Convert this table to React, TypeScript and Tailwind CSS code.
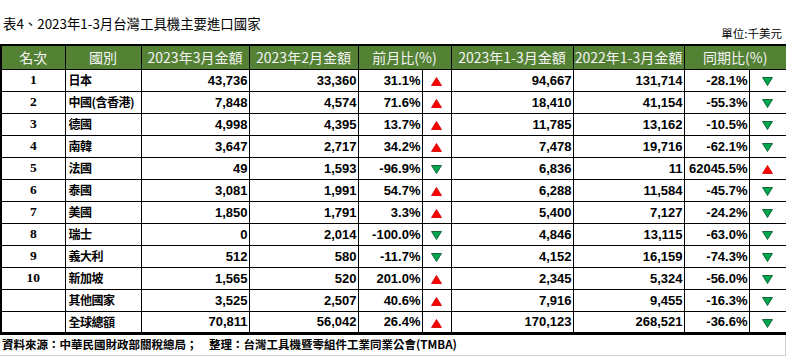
import React from "react";

type Row = {
  rank: string;
  name: string;
  m3: string;
  m2: string;
  mom: string;
  momUp: boolean;
  y23: string;
  y22: string;
  yoy: string;
  yoyUp: boolean;
};

const rows: Row[] = [
  { rank: "1", name: "日本", m3: "43,736", m2: "33,360", mom: "31.1%", momUp: true, y23: "94,667", y22: "131,714", yoy: "-28.1%", yoyUp: false },
  { rank: "2", name: "中國(含香港)", m3: "7,848", m2: "4,574", mom: "71.6%", momUp: true, y23: "18,410", y22: "41,154", yoy: "-55.3%", yoyUp: false },
  { rank: "3", name: "德國", m3: "4,998", m2: "4,395", mom: "13.7%", momUp: true, y23: "11,785", y22: "13,162", yoy: "-10.5%", yoyUp: false },
  { rank: "4", name: "南韓", m3: "3,647", m2: "2,717", mom: "34.2%", momUp: true, y23: "7,478", y22: "19,716", yoy: "-62.1%", yoyUp: false },
  { rank: "5", name: "法國", m3: "49", m2: "1,593", mom: "-96.9%", momUp: false, y23: "6,836", y22: "11", yoy: "62045.5%", yoyUp: true },
  { rank: "6", name: "泰國", m3: "3,081", m2: "1,991", mom: "54.7%", momUp: true, y23: "6,288", y22: "11,584", yoy: "-45.7%", yoyUp: false },
  { rank: "7", name: "美國", m3: "1,850", m2: "1,791", mom: "3.3%", momUp: true, y23: "5,400", y22: "7,127", yoy: "-24.2%", yoyUp: false },
  { rank: "8", name: "瑞士", m3: "0", m2: "2,014", mom: "-100.0%", momUp: false, y23: "4,846", y22: "13,115", yoy: "-63.0%", yoyUp: false },
  { rank: "9", name: "義大利", m3: "512", m2: "580", mom: "-11.7%", momUp: false, y23: "4,152", y22: "16,159", yoy: "-74.3%", yoyUp: false },
  { rank: "10", name: "新加坡", m3: "1,565", m2: "520", mom: "201.0%", momUp: true, y23: "2,345", y22: "5,324", yoy: "-56.0%", yoyUp: false },
  { rank: "", name: "其他國家", m3: "3,525", m2: "2,507", mom: "40.6%", momUp: true, y23: "7,916", y22: "9,455", yoy: "-16.3%", yoyUp: false },
  { rank: "", name: "全球總額", m3: "70,811", m2: "56,042", mom: "26.4%", momUp: true, y23: "170,123", y22: "268,521", yoy: "-36.6%", yoyUp: false },
];

function Tri({ up }: { up: boolean }) {
  return up ? (
    <svg width="11" height="9" viewBox="0 0 11 9" className="inline-block align-middle">
      <polygon points="5.5,0.5 10.5,8.5 0.5,8.5" fill="#ff0000" stroke="#d00000" strokeWidth="0.8" />
    </svg>
  ) : (
    <svg width="11" height="9" viewBox="0 0 11 9" className="inline-block align-middle">
      <polygon points="0.5,0.5 10.5,0.5 5.5,8.5" fill="#00a550" stroke="#0b5e2e" strokeWidth="0.9" />
    </svg>
  );
}

const cjk = "font-['Noto_Sans_CJK_TC','Noto_Sans_CJK_SC',sans-serif]";
const num = "font-['Liberation_Sans',Arial,sans-serif] font-bold text-[13px] text-right pr-[1px]";
const td = "border border-black p-0 h-[22px] leading-none text-black";

export default function App() {
  return (
    <div className="w-[786px] h-[359px] bg-white overflow-hidden">
      <div className={`h-[44px] flex justify-between ${cjk}`}>
        <div className="pt-[14px] pl-[3px] text-[13.4px] leading-[18px] text-black">
          表4、2023年1-3月台灣工具機主要進口國家
        </div>
        <div className="self-end pb-[4px] pr-[4px] text-[11.5px] leading-[14px] text-black">單位:千美元</div>
      </div>
      <table className="table-fixed border-collapse w-[786px] border-t-[2px] border-b-[3px] border-x-[2px] border-black">
        <colgroup>
          <col className="w-[64px]" />
          <col className="w-[76px]" />
          <col className="w-[108px]" />
          <col className="w-[109px]" />
          <col className="w-[64px]" />
          <col className="w-[29px]" />
          <col className="w-[122px]" />
          <col className="w-[111px]" />
          <col className="w-[65px]" />
          <col className="w-[38px]" />
        </colgroup>
        <thead>
          <tr className={`bg-[#548235] text-[#f4f4f4] text-[14px] ${cjk}`}>
            <th className="border border-black h-[24px] p-0 font-normal leading-none">名次</th>
            <th className="border border-black p-0 font-normal leading-none">國別</th>
            <th className="border border-black p-0 font-normal leading-none">2023年3月金額</th>
            <th className="border border-black p-0 font-normal leading-none">2023年2月金額</th>
            <th colSpan={2} className="border border-black p-0 font-normal leading-none">前月比(%)</th>
            <th className="border border-black p-0 font-normal leading-none">2023年1-3月金額</th>
            <th className="border border-black p-0 font-normal leading-none">2022年1-3月金額</th>
            <th colSpan={2} className="border border-black p-0 font-normal leading-none">同期比(%)</th>
          </tr>
        </thead>
        <tbody>
          {rows.map((r, i) => (
            <tr key={i}>
              <td className={`${td} text-center font-['Liberation_Serif',serif] font-bold text-[13.5px]`}>{r.rank}</td>
              <td className={`${td} ${cjk} font-bold text-[12px] text-left pl-[3px] tracking-[-0.5px]`}>{r.name}</td>
              <td className={`${td} ${num}`}>{r.m3}</td>
              <td className={`${td} ${num}`}>{r.m2}</td>
              <td className={`${td} ${num}`}>{r.mom}</td>
              <td className={`${td} text-center`}>
                <Tri up={r.momUp} />
              </td>
              <td className={`${td} ${num}`}>{r.y23}</td>
              <td className={`${td} ${num}`}>{r.y22}</td>
              <td className={`${td} ${num}`}>{r.yoy}</td>
              <td className={`${td} text-center`}>
                <Tri up={r.yoyUp} />
              </td>
            </tr>
          ))}
        </tbody>
      </table>
      <div className={`h-[21px] border-b border-r border-[#d0d0d0] flex items-center pl-[2px] ${cjk} font-bold text-[11.5px] text-black whitespace-pre`}>
        資料來源：中華民國財政部關稅總局；　整理：台灣工具機暨零組件工業同業公會(TMBA)
      </div>
    </div>
  );
}
